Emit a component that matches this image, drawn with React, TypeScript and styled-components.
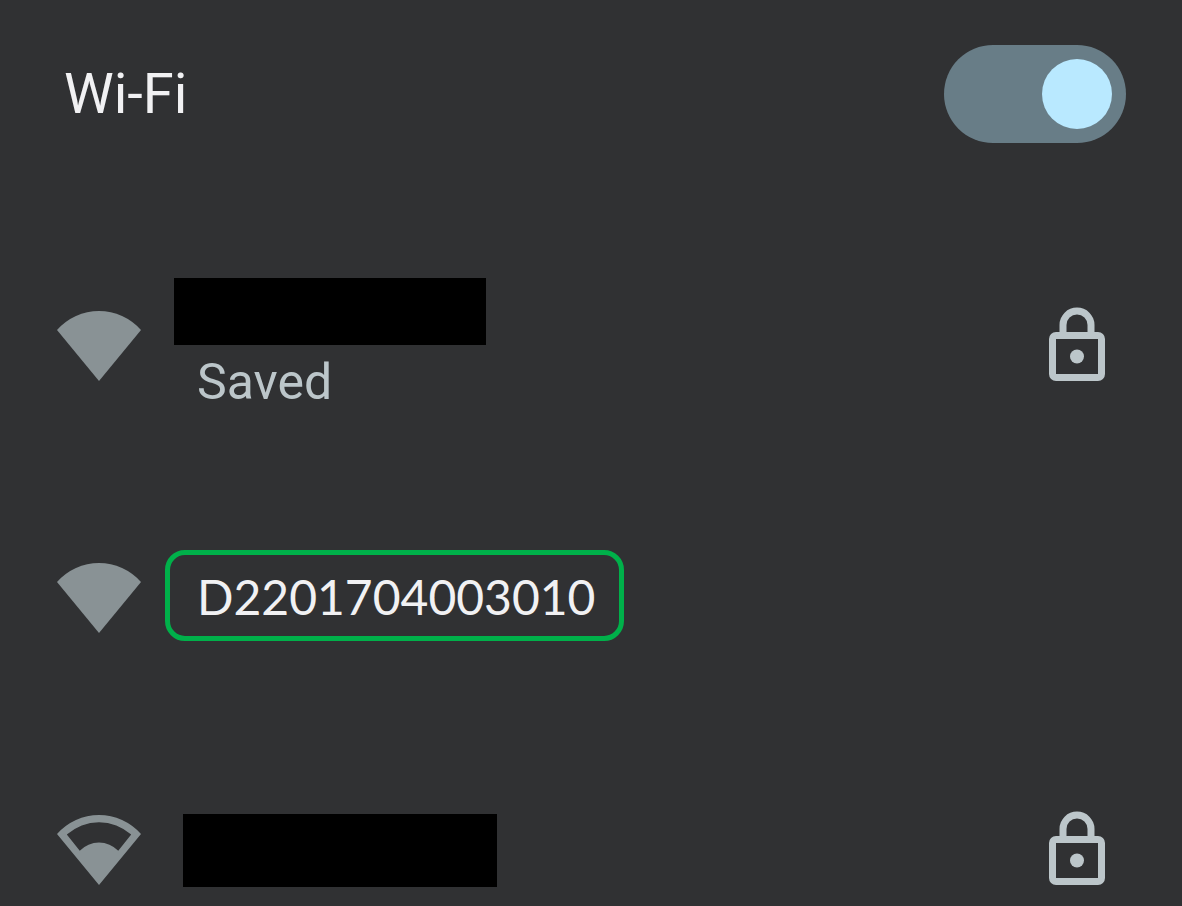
import React from "react";
import styled, { createGlobalStyle } from "styled-components";

const GlobalStyle = createGlobalStyle`
  * { box-sizing: border-box; }
  body {
    margin: 0;
    background: #303133;
    font-family: Roboto, "Open Sans", sans-serif;
  }
`;

const Panel = styled.main`
  height: 100vh;
  overflow: hidden;
  background: #303133;
`;

const Header = styled.label`
  display: flex;
  align-items: center;
  justify-content: space-between;
  height: 188px;
  margin-bottom: 32px;
  padding: 0 56px 0 64px;
`;

const Title = styled.span`
  font-size: 56px;
  line-height: 64px;
  color: #f1f1f3;
`;

const Switch = styled.input`
  appearance: none;
  display: flex;
  align-items: center;
  width: 182px;
  height: 98px;
  margin: 0;
  padding: 14px;
  border-radius: 49px;
  background: #55585a;
  cursor: pointer;

  &::before {
    content: "";
    width: 70px;
    height: 70px;
    border-radius: 50%;
    background: #c0c7ca;
  }

  &:checked {
    justify-content: flex-end;
    background: #687d87;
  }

  &:checked::before {
    background: #b9e9ff;
  }
`;

const NetworkList = styled.ul`
  margin: 0;
  padding: 0;
  list-style: none;
`;

const NetworkRow = styled.button`
  display: flex;
  align-items: center;
  gap: 24px;
  width: 100%;
  height: 252px;
  padding: 0 63px 0 57px;
  border: 0;
  background: none;
  font: inherit;
  text-align: left;
  cursor: pointer;
`;

const Icon = styled.svg<{ $tone: string }>`
  flex: none;
  width: 84px;
  height: 84px;
  fill: ${(p) => p.$tone};
`;

const Details = styled.span`
  flex: 1;
  display: flex;
  flex-direction: column;
  align-items: flex-start;
`;

const Redacted = styled.span<{ $width: number; $height: number; $indent: number }>`
  width: ${(p) => p.$width}px;
  height: ${(p) => p.$height}px;
  margin-left: ${(p) => p.$indent}px;
  background: #000;
`;

const Status = styled.span`
  padding: 5px 0 0 32px;
  font-size: 50px;
  line-height: 64px;
  color: #bcc6ca;
`;

const HighlightedName = styled.span`
  margin-bottom: 5px;
  padding: 13px 24px 11px 27px;
  border: 5px solid #00b04a;
  border-radius: 20px;
  font-family: Lato, sans-serif;
  font-size: 48px;
  line-height: 57px;
  color: #f1f1f3;
`;

const WifiFull = () => (
  <Icon $tone="#899295" viewBox="0 0 24 24" aria-hidden="true">
    <path d="M0 7.45A16 16 0 0 1 24 7.45L12 22Z" />
  </Icon>
);

const WifiWeak = () => (
  <Icon $tone="#899295" viewBox="0 0 24 24" aria-hidden="true">
    <path
      fillRule="evenodd"
      d="M0 7.45A16 16 0 0 1 24 7.45L12 22ZM2.8 7.6L6.5 12.2A7.7 7.7 0 0 1 17.5 12.2L21.2 7.6A13.7 13.7 0 0 0 2.8 7.6Z"
    />
  </Icon>
);

const Lock = () => (
  <Icon $tone="#bcc6ca" viewBox="0 0 24 24" role="img" aria-label="Secured">
    <path
      fillRule="evenodd"
      d="M18 8h-1V6A5 5 0 0 0 7 6v2H6a2 2 0 0 0-2 2v10a2 2 0 0 0 2 2h12a2 2 0 0 0 2-2V10a2 2 0 0 0-2-2ZM9 6a3 3 0 0 1 6 0v2H9ZM18 20H6V10h12Z"
    />
    <circle cx="12" cy="15" r="2" />
  </Icon>
);

export default function App() {
  return (
    <>
      <GlobalStyle />
      <Panel>
        <Header>
          <Title>Wi-Fi</Title>
          <Switch type="checkbox" role="switch" defaultChecked />
        </Header>
        <NetworkList>
          <li>
            <NetworkRow type="button">
              <WifiFull />
              <Details>
                <Redacted $width={312} $height={67} $indent={9} />
                <Status>Saved</Status>
              </Details>
              <Lock />
            </NetworkRow>
          </li>
          <li>
            <NetworkRow type="button">
              <WifiFull />
              <Details>
                <HighlightedName>D2201704003010</HighlightedName>
              </Details>
            </NetworkRow>
          </li>
          <li>
            <NetworkRow type="button">
              <WifiWeak />
              <Details>
                <Redacted $width={314} $height={73} $indent={18} />
              </Details>
              <Lock />
            </NetworkRow>
          </li>
        </NetworkList>
      </Panel>
    </>
  );
}
